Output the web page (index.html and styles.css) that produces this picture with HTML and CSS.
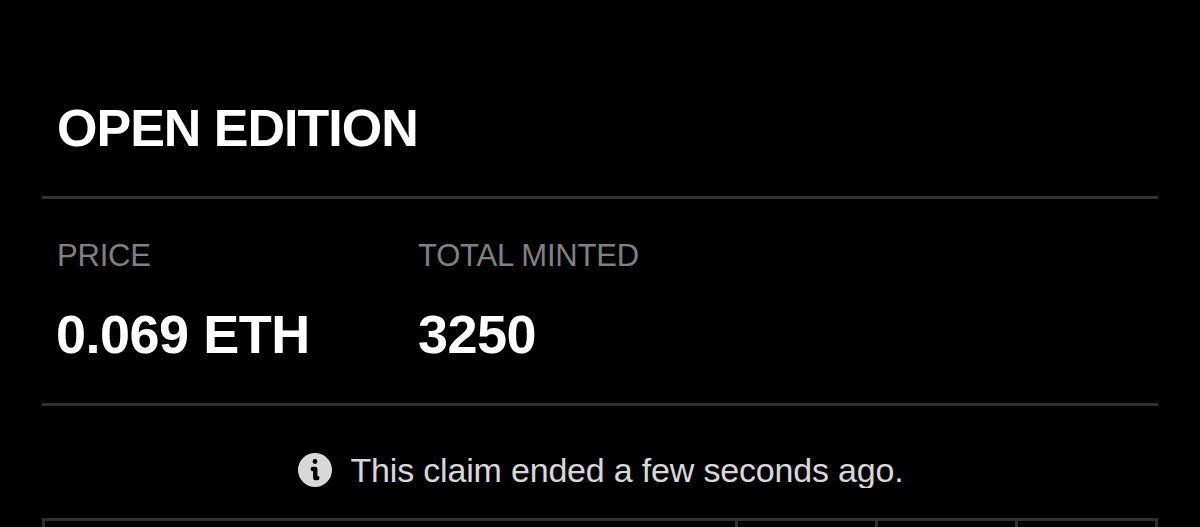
FILE: index.html
```html
<!DOCTYPE html>
<html lang="en">
  <head>
    <meta charset="UTF-8" />
    <title>Open Edition</title>
    <link rel="stylesheet" href="styles.css">
  </head>
  <body>
    <main class="claim">
      <h1 class="claim-title">OPEN EDITION</h1>

      <dl class="stats">
        <div class="stat">
          <dt>PRICE</dt>
          <dd>0.069 ETH</dd>
        </div>
        <div class="stat">
          <dt>TOTAL MINTED</dt>
          <dd>3250</dd>
        </div>
      </dl>

      <p class="notice">
        <svg class="notice-icon" viewBox="0 0 34 34" aria-hidden="true">
          <circle cx="17" cy="17" r="17" fill="#d8d8d8" />
          <circle cx="17" cy="8.500" r="2.400" fill="#000" />
          <path d="M14.800 16H17.300V25H19.300" fill="none" stroke="#000" stroke-width="4.400" stroke-linecap="round" stroke-linejoin="round" />
        </svg>
        <span class="notice-text">This claim ended a few seconds ago.</span>
      </p>

      <div class="table">
        <div class="cell"></div>
        <div class="cell"></div>
        <div class="cell"></div>
        <div class="cell"></div>
      </div>
    </main>
  </body>
</html>
```

FILE: styles.css
```css
html, body {
  margin: 0;
  padding: 0;
  height: 100%;
  overflow: hidden;
  background: #000;
  color: #fff;
  font-family: "Liberation Sans", Arial, sans-serif;
}

.claim {
  display: flex;
  flex-direction: column;
  box-sizing: border-box;
  height: 100%;
  padding: 0 42px;
}

.claim-title {
  box-sizing: border-box;
  height: 199px;
  margin: 0;
  padding: 98px 15px 0;
  border-bottom: 3px solid #303030;
  font-size: 52px;
  letter-spacing: -1px;
  line-height: 60px;
}

.stats {
  display: grid;
  grid-template-columns: 361px 1fr;
  box-sizing: border-box;
  height: 207px;
  margin: 0;
  padding: 39px 15px 0;
  border-bottom: 3px solid #303030;
}

.stat dt {
  color: #808080;
  font-size: 31px;
  letter-spacing: -0.2px;
  line-height: 36px;
}

.stat dd {
  margin: 30px 0 0 -1px;
  font-size: 54px;
  font-weight: bold;
  letter-spacing: -0.5px;
  line-height: 60px;
}

.stat + .stat dd {
  margin-left: 0;
}

.notice {
  display: flex;
  justify-content: center;
  align-items: center;
  gap: 18px;
  height: 112px;
  margin: 0;
  padding-top: 17px;
  padding-left: 2px;
  box-sizing: border-box;
  color: #d8d8d8;
  font-size: 34px;
  letter-spacing: -0.18px;
}

.notice-icon {
  width: 34px;
  height: 34px;
  margin-bottom: 2px;
}

.notice-text {
  height: 35px;
  line-height: 34px;
  overflow: hidden;
}

/* Only the top of the table fits in the window */
.table {
  display: grid;
  grid-template-columns: 690px 137px 137px 1fr;
  gap: 3px;
  flex: 1;
  border: 3px solid #303030;
  border-bottom: 0;
  background: #303030;
}

.cell {
  background: #000;
}
```
